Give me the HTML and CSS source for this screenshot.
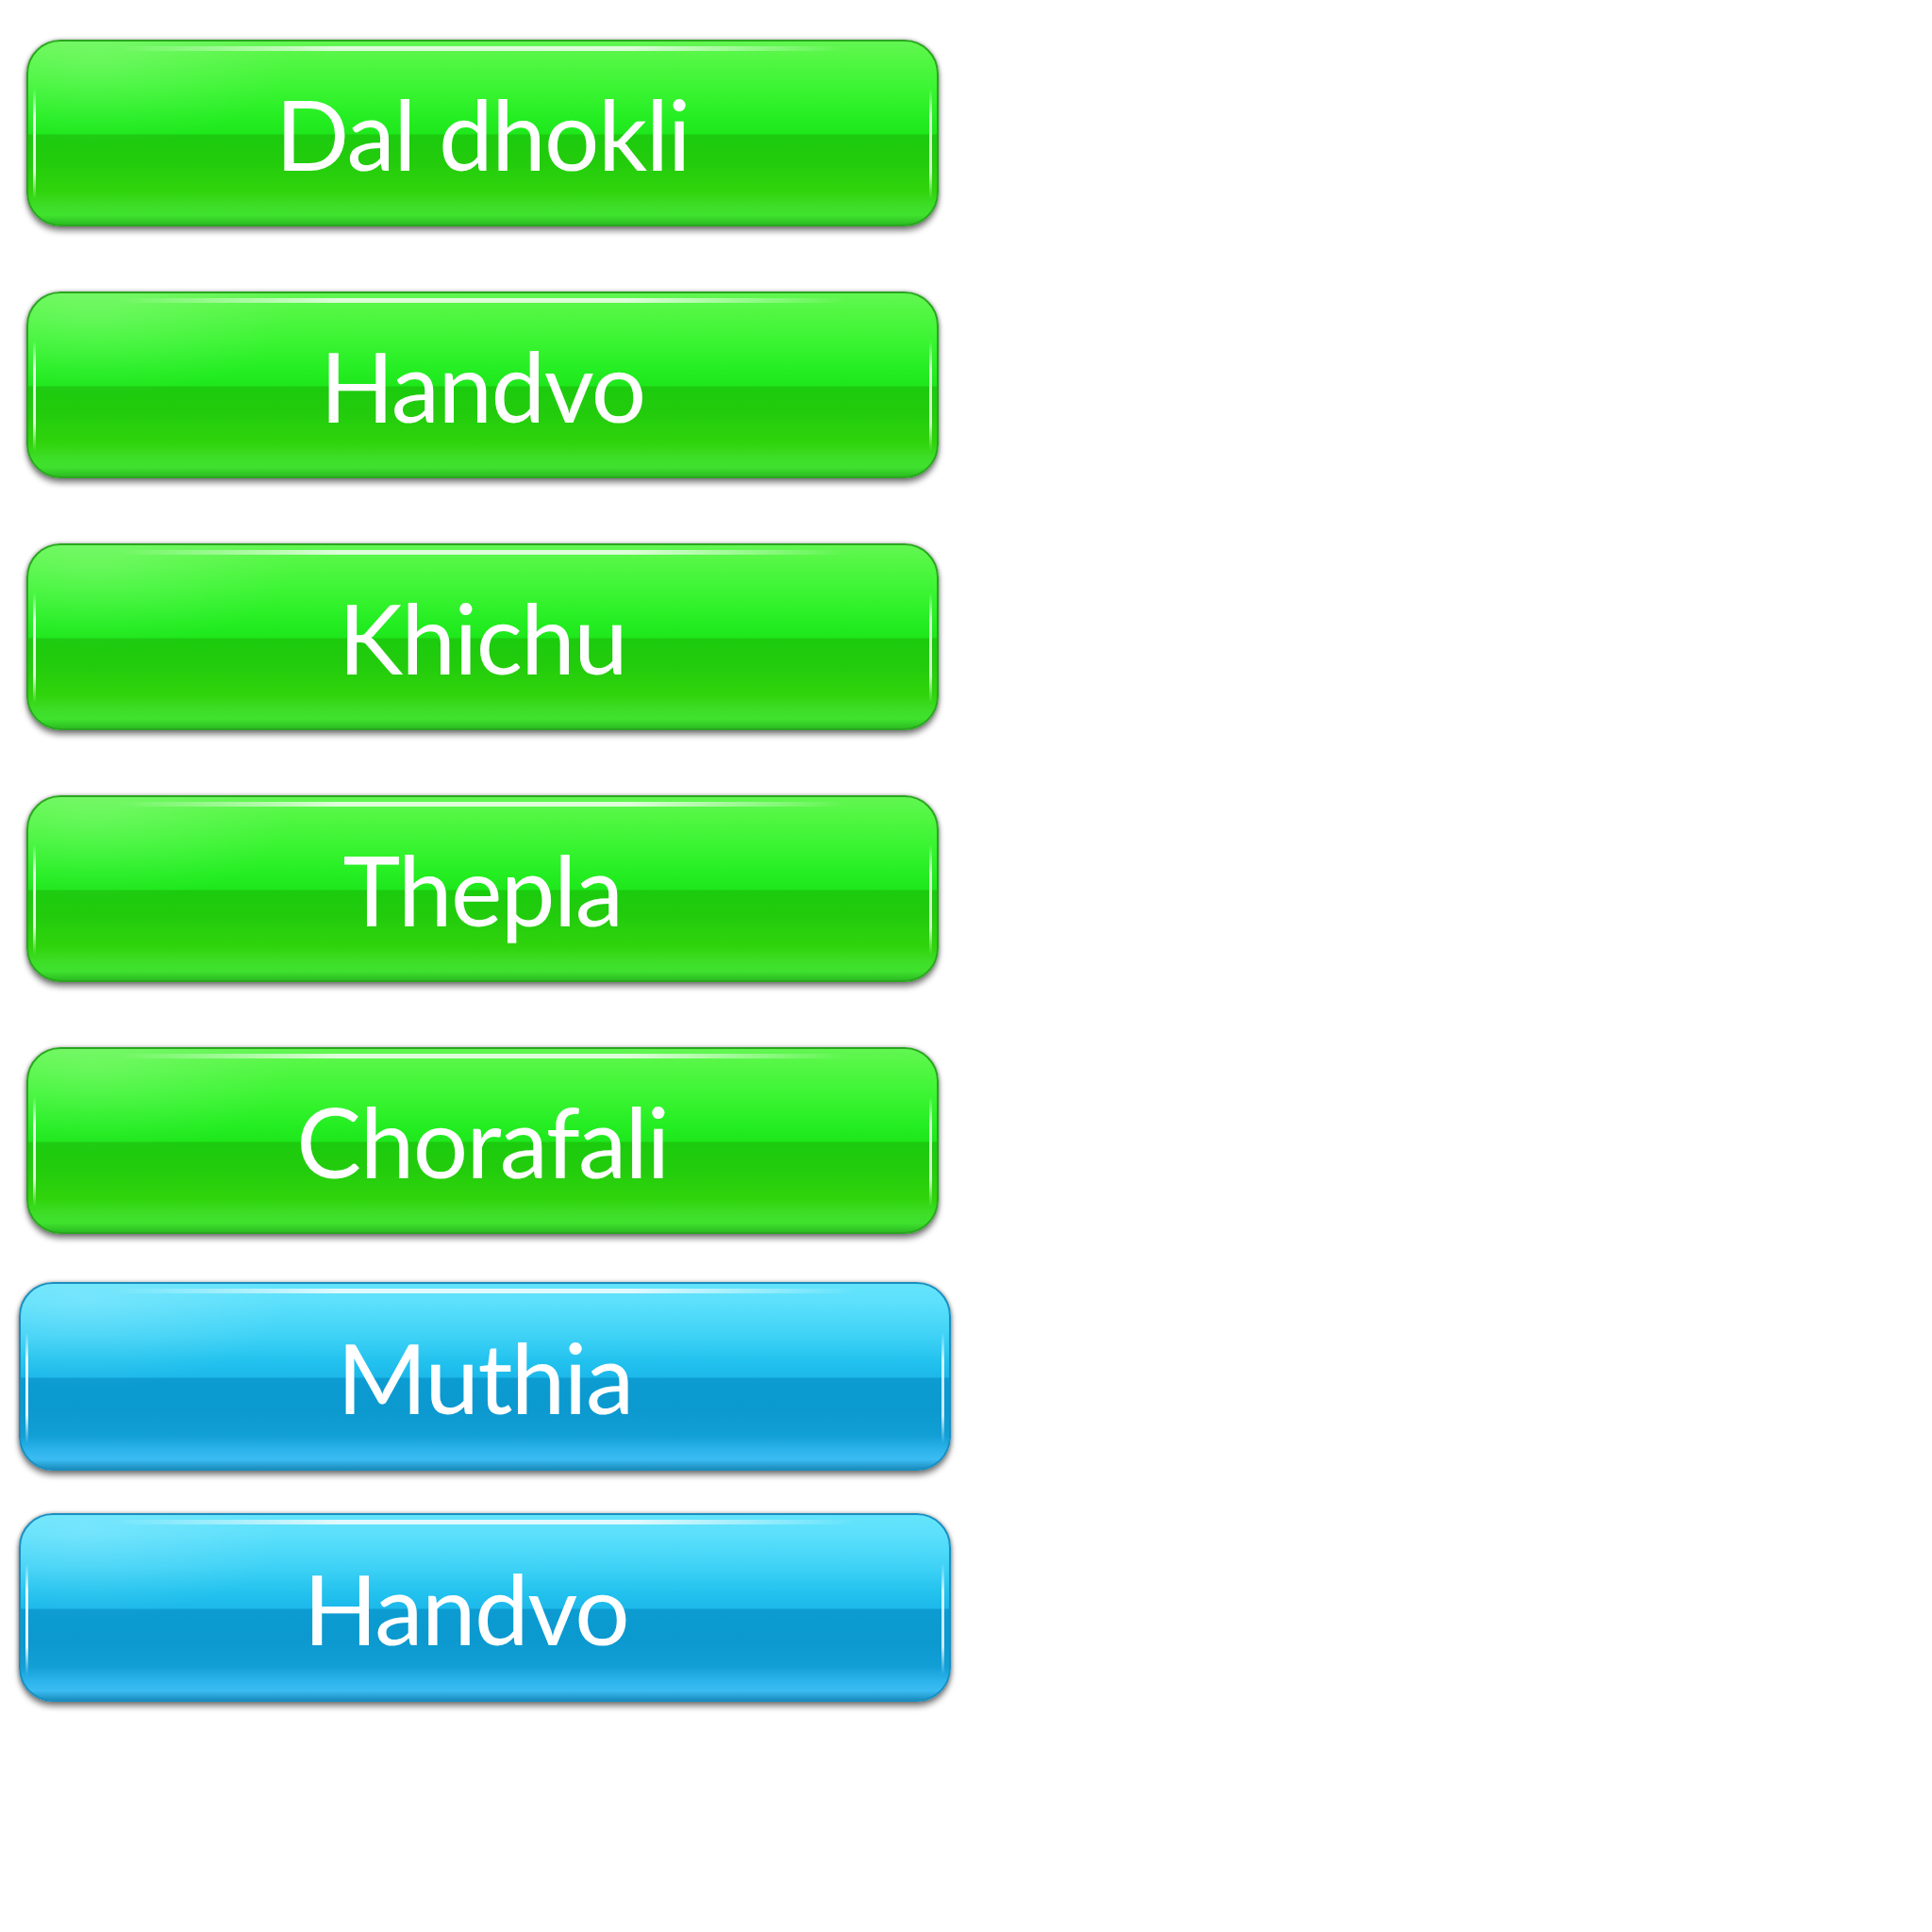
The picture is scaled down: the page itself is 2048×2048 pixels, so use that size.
FILE: index.html
```html
<!DOCTYPE html>
<html>
<head>
<meta charset="utf-8">
<link rel="stylesheet" href="styles.css">
</head>
<body>
<div class="list">
  <div class="btn green"><span class="label">Dal dhokli</span></div>
  <div class="btn green"><span class="label">Handvo</span></div>
  <div class="btn green"><span class="label">Khichu</span></div>
  <div class="btn green"><span class="label">Thepla</span></div>
  <div class="btn green"><span class="label">Chorafali</span></div>
  <div class="btn blue first-blue"><span class="label">Muthia</span></div>
  <div class="btn blue"><span class="label label-left">Handvo</span></div>
</div>
</body>
</html>
```

FILE: styles.css
```css
html, body {
  margin: 0;
  padding: 0;
  background: #ffffff;
}

.list {
  display: flex;
  flex-direction: column;
  align-items: flex-start;
  padding-top: 42px;
}

.btn {
  position: relative;
  box-sizing: border-box;
  display: flex;
  align-items: center;
  justify-content: center;
  border-radius: 36px;
}

.btn::before {
  content: "";
  position: absolute;
  left: 10%;
  right: 10%;
  top: 5px;
  height: 5px;
  border-radius: 3px;
  background: linear-gradient(90deg, rgba(255,255,255,0) 0%, rgba(255,255,255,0.8) 30%, rgba(255,255,255,0.8) 70%, rgba(255,255,255,0) 100%);
}

.btn::after {
  content: "";
  position: absolute;
  left: 5px;
  right: 5px;
  top: 26%;
  bottom: 14%;
  border-left: 3px solid rgba(255,255,255,0.9);
  border-right: 3px solid rgba(255,255,255,0.8);
  -webkit-mask-image: linear-gradient(180deg, transparent 0%, #000 25%, #000 75%, transparent 100%);
  mask-image: linear-gradient(180deg, transparent 0%, #000 25%, #000 75%, transparent 100%);
}

.green {
  width: 967px;
  height: 198px;
  margin-left: 28px;
  margin-bottom: 69px;
  border: 2px solid #2aa620;
  background:
    radial-gradient(ellipse 300px 130px at 70px 20px, rgba(255,255,255,0.14), rgba(255,255,255,0) 70%),
    linear-gradient(180deg,
      #62f652 0%,
      #55f745 8%,
      #3cf533 25%,
      #24ee22 42%,
      #1ee81c 50.5%,
      #1ccb0e 51%,
      #22cc0c 65%,
      #30d40c 82%,
      #3ede28 90%,
      #3fe22e 95%,
      #2cbd22 100%);
  box-shadow: 0 5px 6px rgba(0,0,0,0.45), 0 0 4px rgba(0,0,0,0.35);
}

.green:nth-child(5) {
  margin-bottom: 51px;
}

.blue {
  width: 988px;
  height: 200px;
  margin-left: 20px;
  margin-bottom: 45px;
  border: 2px solid #1a8fc0;
  background:
    radial-gradient(ellipse 300px 130px at 70px 20px, rgba(255,255,255,0.14), rgba(255,255,255,0) 70%),
    linear-gradient(180deg,
      #64e4fc 0%,
      #5ce0fc 10%,
      #3fd2f6 28%,
      #22c2ee 42%,
      #1cb8ea 50.5%,
      #0c9cd2 51%,
      #0b99cf 68%,
      #129fd6 82%,
      #2db4ec 90%,
      #3bbcf2 95%,
      #1b8ec0 100%);
  box-shadow: 0 5px 6px rgba(0,0,0,0.45), 0 0 4px rgba(0,0,0,0.35);
}

.label {
  position: relative;
  z-index: 1;
  font-family: "Lato", "Liberation Sans", sans-serif;
  font-size: 103px;
  font-weight: 400;
  letter-spacing: -1.5px;
  color: #ffffff;
  line-height: 1;
  white-space: nowrap;
}

.label-left {
  margin-right: 40px;
}
```
